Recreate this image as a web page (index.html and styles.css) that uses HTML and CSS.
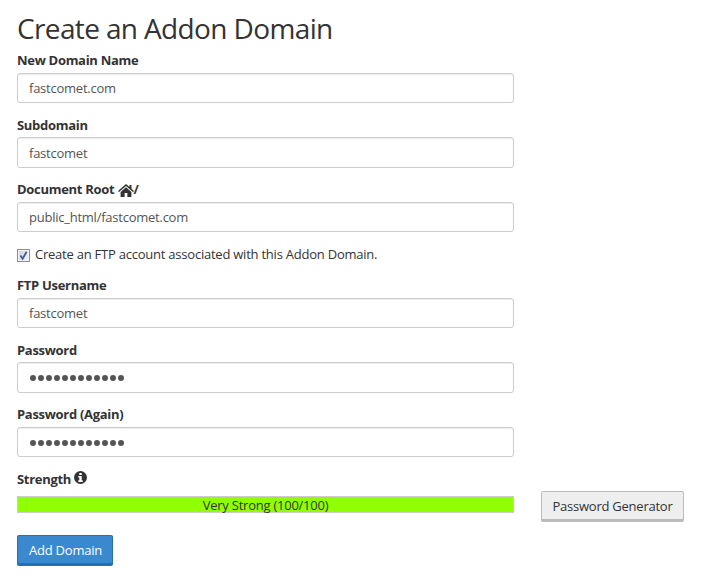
FILE: index.html
```html
<!DOCTYPE html>
<html lang="en">
<head>
    <meta charset="UTF-8">
    <meta name="viewport" content="width=device-width, initial-scale=1.0">
    <title>Addon Domains</title>
    <link rel="stylesheet" href="styles.css">
</head>
<body>
    <h2 class="page-title">Create an Addon Domain</h2>
    <form class="domain-form">
        <div class="form-group">
            <label for="domain">New Domain Name</label>
            <input type="text" id="domain" class="form-control" value="fastcomet.com">
        </div>
        <div class="form-group">
            <label for="subdomain">Subdomain</label>
            <input type="text" id="subdomain" class="form-control" value="fastcomet">
        </div>
        <div class="form-group">
            <label for="root">Document Root <svg class="icon-home" viewBox="0 0 16 13"><path d="M8 0 0 7l1 1.100L8 2l7 6.100 1-1.100-2.500-2.200V1h-2v2z"/><path d="M8 3.200 2.600 7.900V13h4V9h2.800v4h4V7.900z"/></svg>/</label>
            <input type="text" id="root" class="form-control" value="public_html/fastcomet.com">
        </div>
        <!-- FTP account -->
        <div class="checkbox">
            <span class="check-box"><svg viewBox="0 0 13 13"><path d="M3.500 6.500 5.600 9.800 9.600 2.800"/></svg></span>
            <label>Create an FTP account associated with this Addon Domain.</label>
        </div>
        <div class="form-group">
            <label for="ftpuser">FTP Username</label>
            <input type="text" id="ftpuser" class="form-control" value="fastcomet">
        </div>
        <div class="form-group">
            <label>Password</label>
            <div class="form-control dots"><i></i><i></i><i></i><i></i><i></i><i></i><i></i><i></i><i></i><i></i><i></i><i></i></div>
        </div>
        <div class="form-group">
            <label>Password (Again)</label>
            <div class="form-control dots"><i></i><i></i><i></i><i></i><i></i><i></i><i></i><i></i><i></i><i></i><i></i><i></i></div>
        </div>
        <div class="strength">
            <label>Strength <svg class="icon-info" viewBox="0 0 13 13"><circle cx="6.500" cy="6.500" r="6.500"/><path fill="#fff" d="M5.300 2h2.400v2H5.300zM4.300 5h3.400v4.200h1V11H4.300V9.200h1V6.600h-1z"/></svg></label>
            <div class="strength-row">
                <div class="strength-bar">Very Strong (100/100)</div>
                <button type="button" class="btn btn-default">Password Generator</button>
            </div>
        </div>
        <button type="button" class="btn btn-primary">Add Domain</button>
    </form>
</body>
</html>
```
FILE: styles.css
```css
* {
    box-sizing: border-box;
}
body {
    margin: 0;
    padding: 8px 17px 0;
    background: #fff;
    color: #333;
    font-family: "Open Sans", sans-serif;
    font-size: 13px;
    line-height: 19px;
    letter-spacing: -0.24px;
    overflow: hidden;
}
.page-title {
    margin: 0 0 2.7px;
    font-size: 28px;
    font-weight: 400;
    line-height: 40px;
    letter-spacing: -0.63px;
}
.form-group {
    width: 497px;
    height: 64.57px;
}
label {
    display: block;
    height: 19px;
    margin-bottom: 3px;
    padding-top: 0.3px;
    font-weight: 700;
    letter-spacing: -0.3px;
    white-space: nowrap;
}
.form-control {
    display: block;
    width: 100%;
    height: 30.57px;
    padding: 5.55px 11px 5.45px;
    border: 1px solid #ccc;
    border-radius: 3px;
    background: #fff;
    color: #555;
    font-family: inherit;
    font-size: 13px;
    letter-spacing: inherit;
    box-shadow: inset 0 1px 1px rgba(0, 0, 0, 0.075);
}
.icon-home {
    width: 16px;
    height: 13px;
    margin: 0 -1px 0 1px;
    vertical-align: -3px;
    fill: #333;
}
.icon-info {
    width: 13px;
    height: 13px;
    margin-left: 0;
    vertical-align: 0;
    fill: #333;
}
.checkbox {
    display: flex;
    align-items: flex-start;
    gap: 5px;
    height: 31.4px;
}
.checkbox label {
    margin: 0;
    font-weight: 400;
    letter-spacing: -0.23px;
}
/* old style square checkbox */
.check-box {
    width: 13px;
    height: 13px;
    margin-top: 4.4px;
    border: 1px solid #8e8f8f;
    background: linear-gradient(135deg, #cbd0d6, #f6f6f6);
    box-shadow: inset 0 0 0 1px #f4f4f4;
}
.check-box svg {
    display: block;
    width: 13px;
    height: 13px;
    margin: -1px;
    fill: none;
    stroke: #4159a0;
    stroke-width: 1.8;
}
.dots {
    display: flex;
    align-items: center;
    gap: 2px;
    padding: 1.4px 12px 0;
}
.dots i {
    width: 6px;
    height: 6px;
    border-radius: 50%;
    background: #555;
}
.strength-row {
    display: flex;
    align-items: flex-start;
    gap: 27px;
    height: 43.6px;
}
.strength-bar {
    width: 497px;
    height: 17px;
    margin-top: 4.6px;
    border: 1px solid #ccc;
    background: #90ff00;
    text-align: center;
    line-height: 17px;
}
.btn {
    height: 31px;
    padding: 0;
    border: 1px solid;
    border-bottom-width: 3px;
    border-radius: 2px;
    font-family: inherit;
    font-size: 13px;
    line-height: 26px;
    letter-spacing: inherit;
    white-space: nowrap;
}
.btn-default {
    width: 143px;
    flex: none;
    margin-top: -0.6px;
    padding-top: 1px;
    background: #eee;
    border-color: #bbb;
    color: #333;
}
.btn-primary {
    display: block;
    width: 96px;
    padding-left: 1px;
    background: #3a89ce;
    border-color: #2a6ead;
    color: #fff;
}
```
